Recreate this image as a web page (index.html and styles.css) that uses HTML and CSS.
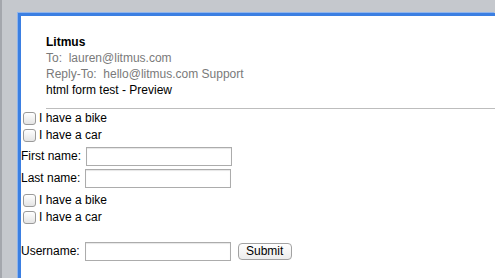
FILE: index.html
```html
<!DOCTYPE html>
<html>
<head>
<meta charset="utf-8">
<link rel="stylesheet" href="styles.css">
</head>
<body>
<div class="frame">
  <div class="panel">
    <div class="header">
      <div class="from">Litmus</div>
      <div class="meta">To:&nbsp; lauren@litmus.com</div>
      <div class="meta">Reply-To:&nbsp; hello@litmus.com Support</div>
      <div class="subject">html form test - Preview</div>
    </div>
    <div class="rule"></div>
    <form class="form">
      <label class="check-row"><span class="box"></span>I have a bike</label>
      <label class="check-row"><span class="box"></span>I have a car</label>
      <div class="field-row first"><span>First name:</span><span class="input"></span></div>
      <div class="field-row"><span>Last name:</span><span class="input"></span></div>
      <label class="check-row after"><span class="box"></span>I have a bike</label>
      <label class="check-row"><span class="box"></span>I have a car</label>
      <div class="field-row user"><span>Username:</span><span class="input"></span><span class="button">Submit</span></div>
    </form>
  </div>
</div>
</body>
</html>
```

FILE: styles.css
```css
html, body {
  margin: 0;
  padding: 0;
  height: 100%;
  overflow: hidden;
}
body {
  background: #c5c8cd;
  font-family: "Liberation Sans", Arial, sans-serif;
  font-size: 12px;
  color: #000;
}
.frame {
  height: 100%;
  box-sizing: border-box;
  border-left: 2px solid #a4a7ad;
  padding: 13px 0 0 16px;
}
.panel {
  height: 100%;
  background: #fff;
  border-top: 3px solid #3b7fe2;
  border-left: 3px solid #3b7fe2;
  box-shadow: -1px -1px 0 #8fb4ec;
}
.header {
  padding: 18px 0 0 25px;
  line-height: 16px;
}
.from {
  font-weight: bold;
}
.meta {
  color: #7a7a7a;
  white-space: pre;
}
.rule {
  margin: 10px 0 0 25px;
  height: 1px;
  background: #bdbdbd;
}
.form {
  display: flex;
  flex-direction: column;
  margin: 0;
}
.check-row {
  display: flex;
  align-items: center;
  height: 17px;
  padding-left: 1px;
}
.check-row.after {
  margin-top: 2px;
}
.box {
  width: 11px;
  height: 11px;
  border: 1px solid #9a9a9a;
  border-radius: 3px;
  background: linear-gradient(#ffffff, #e4e4e4);
  margin-right: 3px;
  margin-left: 1px;
  margin-top: 1px;
}
.field-row {
  display: flex;
  align-items: center;
  height: 22px;
}
.field-row.first {
  margin-top: 2px;
}
.field-row.user {
  margin-top: 16px;
  height: 20px;
}
.input {
  width: 144px;
  height: 17px;
  border: 1px solid #acacac;
  box-shadow: inset 0 1px 1px #e6e6e6;
  margin-left: 5px;
}
.button {
  margin-left: 7px;
  width: 52px;
  height: 15px;
  border: 1px solid #a2a2a2;
  border-radius: 4px;
  background: linear-gradient(#ffffff, #ececec);
  text-align: center;
  line-height: 15px;
  font-size: 12px;
}
```
